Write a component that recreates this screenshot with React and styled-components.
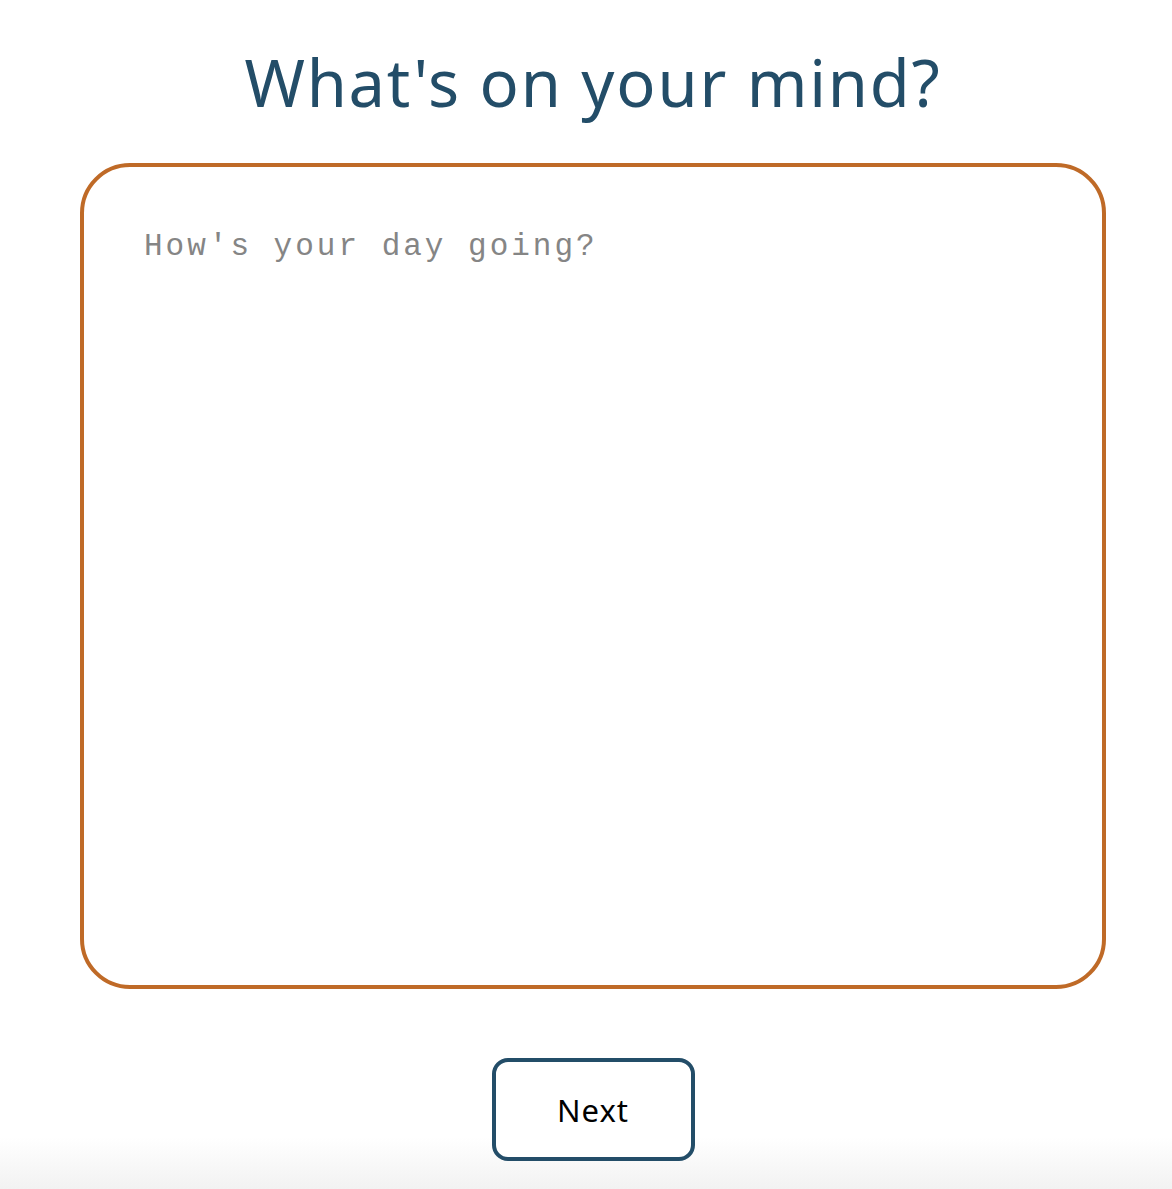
import React from "react"
import styled, { createGlobalStyle } from "styled-components"

const GlobalStyle = createGlobalStyle`
  html, body {
    margin: 0;
    padding: 0;
  }
  body {
    min-height: 100vh;
    background: linear-gradient(to bottom, #ffffff calc(100% - 52px), #f2f2f2 100%);
    font-family: "Noto Sans", sans-serif;
  }
`

const Page = styled.main`
  display: flex;
  flex-direction: column;
  align-items: center;
  padding: 39px 0 0 14px;
  box-sizing: border-box;
`

const Title = styled.h1`
  margin: 0;
  font-family: "Noto Sans", sans-serif;
  font-weight: 400;
  font-size: 65px;
  line-height: 86px;
  color: #234d68;
  letter-spacing: 1.8px;
`

const Entry = styled.textarea`
  box-sizing: border-box;
  width: 1026px;
  height: 826px;
  margin-top: 38px;
  padding: 62px 60px;
  border: 4px solid #bf6a27;
  border-radius: 50px;
  resize: none;
  outline: none;
  background: #fff;
  font-family: "Liberation Mono", "Courier New", monospace;
  font-size: 31px;
  letter-spacing: 3px;
  color: #333;

  &::placeholder {
    color: #858585;
  }
`

const NextButton = styled.button`
  box-sizing: border-box;
  width: 203px;
  height: 103px;
  margin-top: 69px;
  border: 4px solid #234d68;
  border-radius: 16px;
  background: #fff;
  font-family: "Noto Sans", sans-serif;
  font-size: 31px;
  font-weight: 400;
  letter-spacing: 1px;
  color: #000;
  cursor: pointer;
`

export default function App() {
  return (
    <>
      <GlobalStyle />
      <Page>
        <Title>What's on your mind?</Title>
        <Entry placeholder="How's your day going?" />
        <NextButton>Next</NextButton>
      </Page>
    </>
  )
}
